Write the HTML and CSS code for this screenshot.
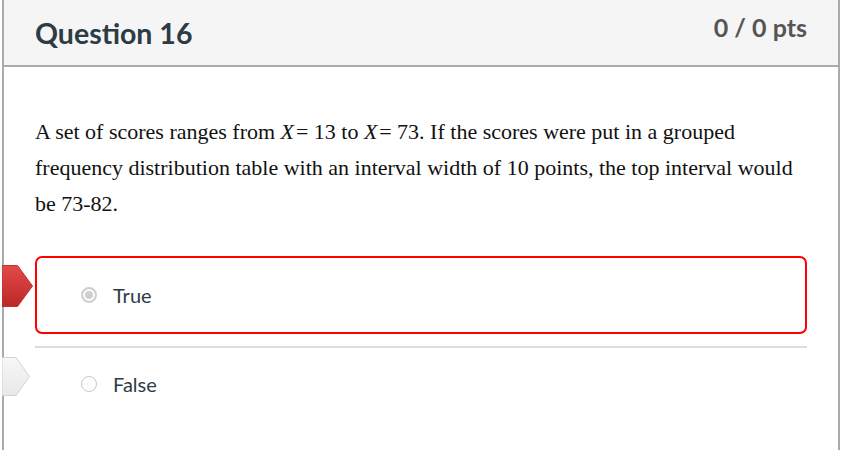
FILE: index.html
```html
<!DOCTYPE html>
<html lang="en">
<head>
    <meta charset="UTF-8">
    <meta name="viewport" content="width=device-width, initial-scale=1.0">
    <title>Question 16</title>
    <link rel="stylesheet" href="styles.css">
</head>
<body>
    <div class="question">
        <div class="question-header">
            <h2 class="question-title">Question 16</h2>
            <div class="question-points">0 / 0 pts</div>
        </div>

        <div class="question-text">
            A set of scores ranges from <i>X</i>&#8202;= 13 to <i>X</i>&#8202;= 73. If the scores were put in a grouped frequency distribution table with an interval width of 10 points, the top interval would be 73-82.
        </div>

        <div class="answers">
            <div class="answer selected">
                <svg class="answer-arrow wrong" width="31" height="42" viewBox="0 0 31 42">
                    <defs>
                        <linearGradient id="redFill" x1="0" y1="0" x2="0" y2="1">
                            <stop offset="0" stop-color="#e44a4a"/>
                            <stop offset="1" stop-color="#bb2828"/>
                        </linearGradient>
                    </defs>
                    <polygon points="0,0.5 15.5,0.5 30.5,21 15.5,41.5 0,41.5" fill="url(#redFill)" stroke="#c23030" stroke-width="1"/>
                </svg>
                <span class="radio checked"></span>
                <span class="answer-label">True</span>
            </div>
            <div class="divider"></div>
            <div class="answer">
                <svg class="answer-arrow other" width="28" height="39" viewBox="0 0 28 39">
                    <defs>
                        <linearGradient id="grayFill" x1="0" y1="0" x2="0" y2="1">
                            <stop offset="0" stop-color="#f7f7f7"/>
                            <stop offset="1" stop-color="#e8e8e8"/>
                        </linearGradient>
                    </defs>
                    <polygon points="0,0.5 14,0.5 27.5,19.5 14,38.5 0,38.5" fill="url(#grayFill)" stroke="#d2d2d2" stroke-width="1"/>
                </svg>
                <span class="radio"></span>
                <span class="answer-label">False</span>
            </div>
        </div>
    </div>
</body>
</html>
```

FILE: styles.css
```css
body {
    margin: 0;
    font-family: Lato, "Open Sans", sans-serif;
    color: #2d3b45;
    background: white;
}
.question {
    box-sizing: border-box;
    width: 838px;
    min-height: 450px;
    margin-left: 2px;
    border-left: 2px solid #aaa;
    border-right: 2px solid #aaa;
}
.question-header {
    display: flex;
    justify-content: space-between;
    height: 65px;
    padding: 0 31px;
    background: #f5f5f5;
    border-bottom: 2px solid #aaa;
}
.question-title {
    margin: 0;
    padding-top: 16px;
    font-size: 28.5px;
    font-weight: bold;
    line-height: 1.2;
}
.question-points {
    padding-top: 12px;
    font-size: 25px;
    font-weight: bold;
    line-height: 1.2;
    color: #555;
}
.question-text {
    padding: 47px 31px 0;
    font-family: "Liberation Serif", "Times New Roman", serif;
    font-size: 22px;
    line-height: 36px;
    color: #111;
}
.answers {
    margin-top: 34px;
    padding: 0 31px;
}
.answer {
    position: relative;
    display: flex;
    align-items: center;
    box-sizing: border-box;
    height: 78px;
    padding-left: 44px;
    border: 2px solid transparent;
    border-radius: 7px;
}
.answer.selected {
    border-color: #f00;
}
.answer-arrow {
    position: absolute;
    left: -35px;
}
.answer-arrow.wrong {
    top: 7px;
}
.answer-arrow.other {
    top: 10px;
}
.radio {
    box-sizing: border-box;
    width: 16px;
    height: 16px;
    border: 1px solid #c8c8c8;
    border-radius: 50%;
    background: white;
}
.radio.checked {
    border: 2px solid #d0d0d0;
    background: #cfcfcf;
    box-shadow: inset 0 0 0 2px white;
}
.answer-label {
    margin-left: 16px;
    font-size: 20px;
}
.divider {
    height: 2px;
    margin: 12px 0 -3px;
    background: #ddd;
}
```
